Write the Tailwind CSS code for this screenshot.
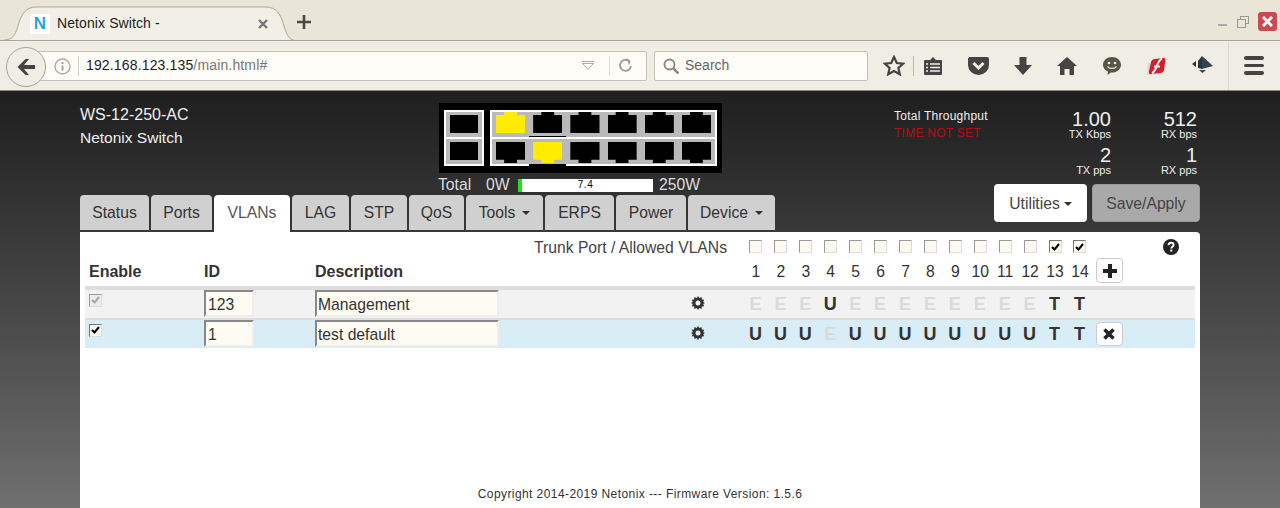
<!DOCTYPE html>
<html>
<head>
<meta charset="UTF-8">
<title>Netonix Switch</title>
<script src="https://cdn.jsdelivr.net/npm/@tailwindcss/browser@4"></script>
</head>
<body class="h-[508px] w-[1280px] overflow-hidden bg-white font-['Liberation_Sans',Arial,sans-serif] text-[#333]">

<!-- browser chrome -->
<div class="h-[40px] bg-[#e9e6d8] flex items-end relative">
    <div class="w-[290px] h-[35px] ml-[4px] mb-[-1px] relative z-10 flex items-center pl-[26px] pr-[26px]">
        <svg class="absolute left-0 top-0" width="290" height="35" viewBox="0 0 290 35"><path d="M0 34C8 34 11 30 14 20 17 8 22 1 32 1H262C272 1 277 8 280 20 283 30 286 34 290 34" fill="#f1efe6" stroke="#a9a79b"/></svg>
        <div class="relative w-[20px] h-[20px] bg-white flex items-center justify-center text-[#29a3e0] font-bold text-[17px]">N</div>
        <span class="relative ml-[7px] text-[14px] text-[#222] tracking-[0.1px]">Netonix Switch -</span>
        <svg class="relative ml-auto" width="10" height="10" viewBox="0 0 10 10"><path d="M1 1l8 8M9 1l-8 8" stroke="#777" stroke-width="2.400"/></svg>
    </div>
    <svg class="ml-[3px] mb-[11px]" width="14" height="14" viewBox="0 0 14 14"><path d="M7 0v14M0 7h14" stroke="#4a4a4a" stroke-width="2.600"/></svg>
    <div class="ml-auto mb-[9px] mr-[3px] flex items-center gap-[10px]">
        <div class="w-[9px] h-[2px] bg-[#aaa] mt-[7px]"></div>
        <svg width="12" height="12" viewBox="0 0 12 12" fill="none" stroke="#999"><rect x="3.500" y="0.500" width="8" height="7"/><rect x="0.500" y="3.500" width="8" height="8" fill="#e9e6d8"/></svg>
        <div class="w-[19px] h-[19px] rounded-[3px] bg-[#c94a52] flex items-center justify-center ml-[-1px]">
            <svg width="11" height="11" viewBox="0 0 11 11"><path d="M1 1l9 9M10 1l-9 9" stroke="#fff" stroke-width="3"/></svg>
        </div>
    </div>
</div>
<div class="h-[51px] bg-[#f0eee4] border-t border-[#a9a79b] border-b border-b-[#8b8a80] flex items-center relative">
    <div class="absolute left-[6px] top-[6px] w-[40px] h-[40px] rounded-full border border-[#a5a397] bg-[#f0eee4] flex items-center justify-center z-10">
        <svg width="20" height="18" viewBox="0 0 20 18"><path d="M9.500 1L1.500 9l8 8h3.500l-5-6h11V7H8l5-6z" fill="#444"/></svg>
    </div>
    <div class="ml-[26px] w-[621px] h-[30px] bg-[#fdfcf7] border border-[#c3c1b6] rounded-r-[2px] flex items-center pl-[27px] relative">
        <svg class="absolute left-[27px] top-[6px]" width="17" height="17" viewBox="0 0 17 17" fill="none"><circle cx="8.500" cy="8.500" r="7.500" stroke="#aaa" stroke-width="1.300"/><path d="M8.500 7.500v5M8.500 4v2" stroke="#999" stroke-width="1.800"/></svg>
        <div class="ml-[24px] h-[20px] w-px bg-[#d5d3c8]"></div>
        <span class="ml-[7px] text-[14px] text-[#222] tracking-[0.15px]">192.168.123.135<span class="text-[#777]">/main.html#</span></span>
        <svg class="ml-auto mr-[5px]" width="14" height="9" viewBox="0 0 14 9" fill="none" stroke="#aaa"><path d="M0.500 0.500h13M1.500 2.500l5.500 6 5.500-6z"/></svg>
        <div class="ml-[9px] h-[20px] w-px bg-[#e0ded4]"></div>
        <svg class="ml-[8px] mr-[13px]" width="15" height="15" viewBox="0 0 15 15" fill="none" stroke="#999" stroke-width="1.800"><path d="M13 8a5.500 5.500 0 1 1-2-5"/><path d="M9 1l3 2-1 3.500" fill="#999" stroke-width="1"/></svg>
    </div>
    <div class="ml-[7px] w-[214px] h-[30px] bg-[#fdfcf7] border border-[#c3c1b6] rounded-[2px] flex items-center pl-[8px]">
        <svg width="16" height="16" viewBox="0 0 16 16" fill="none" stroke="#888" stroke-width="1.800"><circle cx="6.500" cy="6.500" r="5"/><path d="M10.500 10.500l5 5" stroke-width="2.500"/></svg>
        <span class="ml-[6px] text-[14px] text-[#666]">Search</span>
    </div>
    <!-- toolbar icons -->
    <div class="ml-[15px] w-[22px] flex justify-center">
        <svg width="22" height="21" viewBox="0 0 22 21" fill="none" stroke="#444" stroke-width="2.200"><path d="M11 2l2.800 6 6.400.7-4.800 4.300 1.400 6.300-5.800-3.300-5.800 3.300 1.400-6.300L1.800 8.700 8.200 8z"/></svg>
    </div>
    <div class="ml-[8px] w-px h-[20px] bg-[#bbb9ad]"></div>
    <svg class="ml-[10px]" width="18" height="20" viewBox="0 0 18 20"><path d="M1 4h5l3-3 3 3h5a1 1 0 0 1 1 1v13a1 1 0 0 1-1 1H1a1 1 0 0 1-1-1V5a1 1 0 0 1 1-1z" fill="#444"/><path d="M2 8h2M6 8h10M2 11.500h2M6 11.500h10M2 15h2M6 15h10" stroke="#f0eee4" stroke-width="1.500"/></svg>
    <svg class="ml-[26px]" width="21" height="18" viewBox="0 0 21 18"><path d="M2 0h17a2 2 0 0 1 2 2v6a10.500 10 0 0 1-21 0V2a2 2 0 0 1 2-2z" fill="#444"/><path d="M5.500 6l5 5 5-5" stroke="#f0eee4" stroke-width="3" fill="none"/></svg>
    <svg class="ml-[25px]" width="18" height="18" viewBox="0 0 18 18"><path d="M5.500 0h7v8H18l-9 10L0 8h5.500z" fill="#444"/></svg>
    <svg class="ml-[25px]" width="20" height="18" viewBox="0 0 20 18"><path d="M10 0l10 9h-3v9h-4.500v-6h-5v6H3V9H0z" fill="#444"/></svg>
    <svg class="ml-[26px]" width="18" height="18" viewBox="0 0 18 18"><path d="M9 0c5 0 9 3.400 9 7.800s-4 7.800-9 7.800l-1 0-3.500 2.400.5-3.200C2.200 13.500 0 11 0 7.800 0 3.400 4 0 9 0z" fill="#555548"/><circle cx="6" cy="6" r="1.300" fill="#f0eee4"/><circle cx="12" cy="6" r="1.300" fill="#f0eee4"/><path d="M4.500 9.500c1.500 2.500 7.500 2.500 9 0" stroke="#f0eee4" stroke-width="1.300" fill="none"/></svg>
    <svg class="ml-[26px]" width="20" height="20" viewBox="0 0 20 20"><path d="M1 6L0 19l14-1z" fill="#dcdad2"/><path d="M4 6Q5 3 8 3L17 2Q19 2 18.500 4L17 14Q16.500 17 13 17L3 18Q1.500 18 2 15z" fill="#d2202c"/><path d="M5 17C10 15 9 6 15 2.500M7 10.500h6" stroke="#fff" stroke-width="2" fill="none"/></svg>
    <svg class="ml-[25px]" width="21" height="21" viewBox="0 0 21 21"><path d="M10 1l11 10-11 3z" fill="#36424f"/><path d="M10 1L6 6v7l4 1z" fill="#2b3542"/><path d="M0 9l4-3v6z" fill="#333"/><path d="M7 15h7l-3.500 3z" fill="#444"/></svg>
    <div class="ml-[15px] w-px h-[48px] bg-[#dcdacf]"></div>
    <div class="ml-[15px] w-[20px] flex flex-col gap-[4px]">
        <div class="h-[3.500px] bg-[#444] rounded-full"></div>
        <div class="h-[3.500px] bg-[#444] rounded-full"></div>
        <div class="h-[3.500px] bg-[#444] rounded-full"></div>
    </div>
</div>

<!-- page -->
<div class="h-[417px] bg-gradient-to-b from-[#1f1f1f] to-[#707070] px-[80px] relative overflow-hidden">
    <div class="h-[104px] flex">
        <div class="w-[358px] pt-[12px] leading-[23px] text-[#eee]">
            <div class="text-[16px]">WS-12-250-AC</div>
            <div class="text-[15.5px]">Netonix Switch</div>
        </div>
        <div class="w-[284px] pt-[12px]">
            <div class="w-[283px] h-[70px] bg-black px-[5px] py-[7px] flex gap-[6px] ml-px">
                <div class="w-[40px] h-[56px] border-2 border-white bg-white flex flex-col gap-[2px]">
                    <div class="h-[25px] bg-[#b9b9b9] pt-[3px] pb-[4px] px-[4px]"><div class="h-full bg-black"></div></div>
                    <div class="h-[25px] bg-[#b9b9b9] pt-[3px] pb-[4px] px-[4px]"><div class="h-full bg-black"></div></div>
                </div>
                <div class="flex-1 h-[56px] border-2 border-white bg-white grid grid-cols-6 grid-rows-2 gap-y-[2px]">
                    <div class="bg-[#b9b9b9] pb-[4px] px-[4px]"><div class="h-full bg-[#ffec00] [clip-path:polygon(0_14%,28%_14%,28%_0,72%_0,72%_14%,100%_14%,100%_100%,0_100%)]"></div></div>
                    <div class="bg-[#b9b9b9] pb-[3px] px-[4px] border-b border-b-black"><div class="h-full bg-black [clip-path:polygon(0_14%,28%_14%,28%_0,72%_0,72%_14%,100%_14%,100%_100%,0_100%)]"></div></div>
                    <div class="bg-[#b9b9b9] pb-[4px] px-[4px]"><div class="h-full bg-black [clip-path:polygon(0_14%,28%_14%,28%_0,72%_0,72%_14%,100%_14%,100%_100%,0_100%)]"></div></div>
                    <div class="bg-[#b9b9b9] pb-[4px] px-[4px]"><div class="h-full bg-black [clip-path:polygon(0_14%,28%_14%,28%_0,72%_0,72%_14%,100%_14%,100%_100%,0_100%)]"></div></div>
                    <div class="bg-[#b9b9b9] pb-[4px] px-[4px]"><div class="h-full bg-black [clip-path:polygon(0_14%,28%_14%,28%_0,72%_0,72%_14%,100%_14%,100%_100%,0_100%)]"></div></div>
                    <div class="bg-[#b9b9b9] pb-[4px] px-[4px]"><div class="h-full bg-black [clip-path:polygon(0_14%,28%_14%,28%_0,72%_0,72%_14%,100%_14%,100%_100%,0_100%)]"></div></div>
                    <div class="bg-[#b9b9b9] pt-[3px] pb-[1px] px-[4px]"><div class="h-full bg-black [clip-path:polygon(0_0,100%_0,100%_84%,72%_84%,72%_100%,28%_100%,28%_84%,0_84%)]"></div></div>
                    <div class="bg-[#b9b9b9] pt-[3px] pb-[1px] px-[4px] mb-[-2px] border-b-2 border-b-black"><div class="h-full bg-[#ffec00] [clip-path:polygon(0_0,100%_0,100%_84%,72%_84%,72%_100%,28%_100%,28%_84%,0_84%)]"></div></div>
                    <div class="bg-[#b9b9b9] pt-[3px] pb-[1px] px-[4px]"><div class="h-full bg-black [clip-path:polygon(0_0,100%_0,100%_84%,72%_84%,72%_100%,28%_100%,28%_84%,0_84%)]"></div></div>
                    <div class="bg-[#b9b9b9] pt-[3px] pb-[1px] px-[4px]"><div class="h-full bg-black [clip-path:polygon(0_0,100%_0,100%_84%,72%_84%,72%_100%,28%_100%,28%_84%,0_84%)]"></div></div>
                    <div class="bg-[#b9b9b9] pt-[3px] pb-[1px] px-[4px]"><div class="h-full bg-black [clip-path:polygon(0_0,100%_0,100%_84%,72%_84%,72%_100%,28%_100%,28%_84%,0_84%)]"></div></div>
                    <div class="bg-[#b9b9b9] pt-[3px] pb-[1px] px-[4px]"><div class="h-full bg-black [clip-path:polygon(0_0,100%_0,100%_84%,72%_84%,72%_100%,28%_100%,28%_84%,0_84%)]"></div></div>
                </div>
            </div>
            <div class="h-[18px] mt-[3px] flex items-center text-[15.7px] text-[#ddd] leading-none">
                <span class="w-[48px]">Total</span>
                <span class="w-[31px]">0W</span>
                <div class="w-[137px] h-[15px] bg-white border border-[#333] relative flex items-center justify-center text-[10px] text-black tracking-[0.5px]">
                    <div class="absolute left-0 top-0 bottom-0 w-[4px] bg-[#22dd22]"></div>7.4
                </div>
                <span class="ml-[5px]">250W</span>
            </div>
        </div>
        <div class="flex-1 pt-[12px] flex">
            <div class="ml-[172px] w-[120px] text-[12px] leading-[17px] pt-[5px] tracking-[0.25px]">
                <div class="text-[#eee]">Total Throughput</div>
                <div class="text-[#b01010]">TIME NOT SET</div>
            </div>
            <div class="ml-auto mr-[3px] grid grid-cols-[86px_86px] text-right text-[#eee] h-[72px]">
                <div class="pt-[6px]"><div class="text-[20px] leading-[20px] font-medium">1.00</div><div class="text-[11px] leading-[10px]">TX Kbps</div></div>
                <div class="pt-[6px]"><div class="text-[20px] leading-[20px] font-medium">512</div><div class="text-[11px] leading-[10px]">RX bps</div></div>
                <div class="pt-[6px]"><div class="text-[20px] leading-[20px] font-medium">2</div><div class="text-[11px] leading-[10px]">TX pps</div></div>
                <div class="pt-[6px]"><div class="text-[20px] leading-[20px] font-medium">1</div><div class="text-[11px] leading-[10px]">RX pps</div></div>
            </div>
        </div>
    </div>

    <!-- tabs + buttons -->
    <div class="h-[37px] flex items-start relative text-[15.7px]">
        <div class="flex gap-[2px] h-[36px] text-[#333]">
            <div class="w-[69px] h-[35px] pt-[1px] bg-[#d0d0d0] rounded-t-[4px] flex items-center justify-center">Status</div>
            <div class="w-[61px] h-[35px] pt-[1px] bg-[#d0d0d0] rounded-t-[4px] flex items-center justify-center">Ports</div>
            <div class="w-[76px] h-[37px] bg-white rounded-t-[4px] flex items-center justify-center pb-[1px] text-[#555]">VLANs</div>
            <div class="w-[57px] h-[35px] pt-[1px] bg-[#d0d0d0] rounded-t-[4px] flex items-center justify-center">LAG</div>
            <div class="w-[56px] h-[35px] pt-[1px] bg-[#d0d0d0] rounded-t-[4px] flex items-center justify-center">STP</div>
            <div class="w-[55px] h-[35px] pt-[1px] bg-[#d0d0d0] rounded-t-[4px] flex items-center justify-center">QoS</div>
            <div class="w-[77px] h-[35px] pt-[1px] bg-[#d0d0d0] rounded-t-[4px] flex items-center justify-center">Tools<span class="ml-[7px] border-x-[4px] border-x-transparent border-t-[4px] border-t-[#333]"></span></div>
            <div class="w-[69px] h-[35px] pt-[1px] bg-[#d0d0d0] rounded-t-[4px] flex items-center justify-center">ERPS</div>
            <div class="w-[70px] h-[35px] pt-[1px] bg-[#d0d0d0] rounded-t-[4px] flex items-center justify-center">Power</div>
            <div class="w-[87px] h-[35px] pt-[1px] bg-[#d0d0d0] rounded-t-[4px] flex items-center justify-center">Device<span class="ml-[7px] border-x-[4px] border-x-transparent border-t-[4px] border-t-[#333]"></span></div>
        </div>
        <div class="ml-auto flex gap-[5px] mt-[-11px]">
            <div class="w-[93px] h-[38px] pt-[1px] bg-white rounded-[4px] flex items-center justify-center text-[#444]">Utilities<span class="ml-[4px] border-x-[4px] border-x-transparent border-t-[4px] border-t-[#333]"></span></div>
            <div class="w-[108px] h-[38px] pt-[1px] bg-[#a9a9a9] rounded-[4px] border border-[#999] flex items-center justify-center text-[#444]">Save/Apply</div>
        </div>
    </div>

    <!-- card -->
    <div class="h-[276px] bg-white rounded-tr-[4px] px-[5px] text-[15.7px] relative">
        <div class="h-[26px] pt-[3px] flex items-center">
            <div class="w-[642px] text-right text-[#444] pt-[2px]">Trunk Port / Allowed VLANs</div>
            <div class="grid grid-cols-[repeat(14,24.93px)] justify-items-center w-[350px] ml-[16.5px]">
                <span class="w-[13px] h-[13px] bg-[#fbf9f0] border border-[#999] border-r-[#ddd] border-b-[#ddd]"></span>
                <span class="w-[13px] h-[13px] bg-[#fbf9f0] border border-[#999] border-r-[#ddd] border-b-[#ddd]"></span>
                <span class="w-[13px] h-[13px] bg-[#fbf9f0] border border-[#999] border-r-[#ddd] border-b-[#ddd]"></span>
                <span class="w-[13px] h-[13px] bg-[#fbf9f0] border border-[#999] border-r-[#ddd] border-b-[#ddd]"></span>
                <span class="w-[13px] h-[13px] bg-[#fbf9f0] border border-[#999] border-r-[#ddd] border-b-[#ddd]"></span>
                <span class="w-[13px] h-[13px] bg-[#fbf9f0] border border-[#999] border-r-[#ddd] border-b-[#ddd]"></span>
                <span class="w-[13px] h-[13px] bg-[#fbf9f0] border border-[#999] border-r-[#ddd] border-b-[#ddd]"></span>
                <span class="w-[13px] h-[13px] bg-[#fbf9f0] border border-[#999] border-r-[#ddd] border-b-[#ddd]"></span>
                <span class="w-[13px] h-[13px] bg-[#fbf9f0] border border-[#999] border-r-[#ddd] border-b-[#ddd]"></span>
                <span class="w-[13px] h-[13px] bg-[#fbf9f0] border border-[#999] border-r-[#ddd] border-b-[#ddd]"></span>
                <span class="w-[13px] h-[13px] bg-[#fbf9f0] border border-[#999] border-r-[#ddd] border-b-[#ddd]"></span>
                <span class="w-[13px] h-[13px] bg-[#fbf9f0] border border-[#999] border-r-[#ddd] border-b-[#ddd]"></span>
                <span class="w-[13px] h-[13px] bg-[#fbf9f0] border border-[#777] border-r-[#ddd] border-b-[#ddd] flex items-center justify-center"><svg width="9" height="8" viewBox="0 0 9 8"><path d="M1 4l2.500 2.500L8 1" stroke="#000" stroke-width="2" fill="none"/></svg></span>
                <span class="w-[13px] h-[13px] bg-[#fbf9f0] border border-[#777] border-r-[#ddd] border-b-[#ddd] flex items-center justify-center"><svg width="9" height="8" viewBox="0 0 9 8"><path d="M1 4l2.500 2.500L8 1" stroke="#000" stroke-width="2" fill="none"/></svg></span>
            </div>
            <svg class="ml-[69.5px]" width="16" height="16" viewBox="0 0 16 16"><circle cx="8" cy="8" r="8" fill="#222"/><path d="M5.500 6.200C5.600 4.600 6.700 3.800 8.100 3.800c1.500 0 2.500.9 2.500 2.100 0 1.800-2.300 1.900-2.300 3.600" stroke="#fff" stroke-width="1.900" fill="none"/><rect x="7.200" y="10.600" width="2.100" height="2" fill="#fff"/></svg>
        </div>
        <div class="h-[25px] flex items-center relative">
            <div class="w-[119px] pl-[4px] pt-[2px] font-bold text-[16px]">Enable</div>
            <div class="w-[111px] pt-[2px] font-bold text-[16px]">ID</div>
            <div class="w-[428.5px] pt-[2px] font-bold text-[16px]">Description</div>
            <div class="grid grid-cols-[repeat(14,24.93px)] justify-items-center w-[350px] pt-[2px]">
                <span>1</span><span>2</span><span>3</span><span>4</span><span>5</span><span>6</span><span>7</span><span>8</span><span>9</span><span>10</span><span>11</span><span>12</span><span>13</span><span>14</span>
            </div>
            <div class="w-[27px] h-[25px] ml-[2.500px] bg-white border border-[#ccc] rounded-[4px] flex items-center justify-center">
                <svg width="14" height="14" viewBox="0 0 14 14"><path d="M7 0v14M0 7h14" stroke="#222" stroke-width="4"/></svg>
            </div>
        </div>
        <div class="border-t-[4px] border-[#ddd] mt-[3px] h-[32px] bg-[#f2f2f2] flex items-start">
            <div class="w-[119px] pl-[4px] h-full pt-[4px]"><span class="block w-[13px] h-[13px] bg-[#ececec] border border-[#999] border-r-[#ddd] border-b-[#ddd]"><svg width="11" height="11" viewBox="0 0 11 11"><path d="M2 5l2.500 2.500L9 2" stroke="#a5a59a" stroke-width="2" fill="none"/></svg></span></div>
            <div class="w-[111px]"><div class="w-[50px] h-[27px] pt-[2px] bg-[#fdfbf2] border-2 border-r-[#eee] border-b-[#eee] border-t-[#888] border-l-[#888] pl-[2px] flex items-center">123</div></div>
            <div class="w-[375.5px]"><div class="w-[184px] h-[27px] pt-[2px] bg-[#fdfbf2] border-2 border-r-[#eee] border-b-[#eee] border-t-[#888] border-l-[#888] pl-[1px] flex items-center">Management</div></div>
            <svg class="mt-[6px]" width="14" height="14" viewBox="0 0 14 14"><path d="M7 0l1.300 2 2.200-1 .4 2.400 2.300.3-1 2.200L14 7l-1.800 1.100 1 2.200-2.300.3-.4 2.400-2.200-1L7 14l-1.300-2-2.200 1-.4-2.400-2.300-.3 1-2.200L0 7l1.800-1.100-1-2.200 2.300-.3.4-2.400 2.200 1z" fill="#333"/><circle cx="7" cy="7" r="2.500" fill="#f2f2f2"/></svg>
            <div class="grid grid-cols-[repeat(14,24.93px)] justify-items-center w-[350px] ml-[38.5px] font-bold text-[18px] text-[#dadada] mt-[1px]">
                <span>E</span><span>E</span><span>E</span><span class="text-[#333]">U</span><span>E</span><span>E</span><span>E</span><span>E</span><span>E</span><span>E</span><span>E</span><span>E</span><span class="text-[#333]">T</span><span class="text-[#333]">T</span>
            </div>
        </div>
        <div class="border-t-[2px] border-[#ddd] h-[30px] bg-[#d9edf7] flex items-start">
            <div class="w-[119px] pl-[4px] h-full pt-[4px]"><span class="block w-[13px] h-[13px] bg-[#fbf9f0] border border-[#777] border-r-[#ddd] border-b-[#ddd]"><svg width="11" height="11" viewBox="0 0 11 11"><path d="M2 5l2.500 2.500L9 2" stroke="#000" stroke-width="2" fill="none"/></svg></span></div>
            <div class="w-[111px]"><div class="w-[50px] h-[27px] pt-[2px] bg-[#fdfbf2] border-2 border-r-[#eee] border-b-[#eee] border-t-[#888] border-l-[#888] pl-[2px] flex items-center">1</div></div>
            <div class="w-[375.5px]"><div class="w-[184px] h-[27px] pt-[2px] bg-[#fdfbf2] border-2 border-r-[#eee] border-b-[#eee] border-t-[#888] border-l-[#888] pl-[1px] flex items-center">test default</div></div>
            <svg class="mt-[6px]" width="14" height="14" viewBox="0 0 14 14"><path d="M7 0l1.300 2 2.200-1 .4 2.400 2.300.3-1 2.200L14 7l-1.800 1.100 1 2.200-2.300.3-.4 2.400-2.200-1L7 14l-1.300-2-2.200 1-.4-2.400-2.300-.3 1-2.200L0 7l1.800-1.100-1-2.200 2.300-.3.4-2.400 2.200 1z" fill="#333"/><circle cx="7" cy="7" r="2.500" fill="#d9edf7"/></svg>
            <div class="grid grid-cols-[repeat(14,24.93px)] justify-items-center w-[350px] ml-[38.5px] font-bold text-[18px] text-[#333] mt-[1px]">
                <span>U</span><span>U</span><span>U</span><span class="text-[#dadada]">E</span><span>U</span><span>U</span><span>U</span><span>U</span><span>U</span><span>U</span><span>U</span><span>U</span><span>T</span><span>T</span>
            </div>
            <div class="w-[27px] h-[24px] mt-[2px] ml-[2.500px] bg-white border border-[#ccc] rounded-[4px] flex items-center justify-center">
                <svg width="12" height="12" viewBox="0 0 12 12"><path d="M1.500 1.500l9 9M10.500 1.500l-9 9" stroke="#222" stroke-width="3.600"/></svg>
            </div>
        </div>
        <div class="mt-[137px] text-center text-[12px] tracking-[0.42px] text-[#333]">Copyright 2014-2019 Netonix --- Firmware Version: 1.5.6</div>
    </div>
</div>
</body>
</html>
